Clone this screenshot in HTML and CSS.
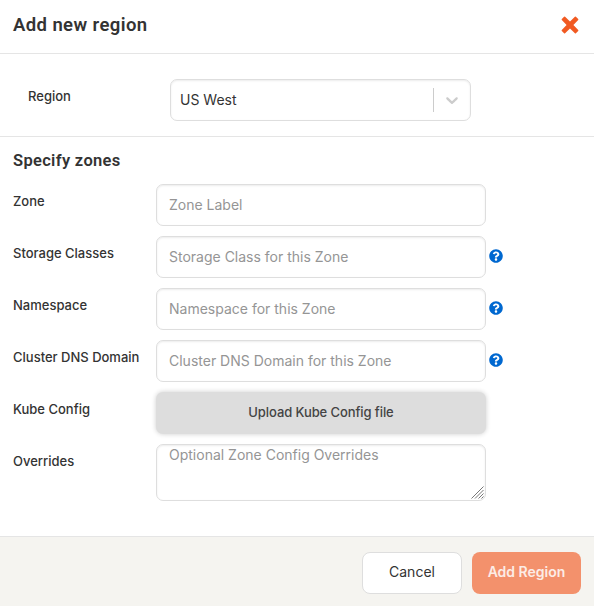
FILE: index.html
```html
<!DOCTYPE html>
<html lang="en">
<head>
<meta charset="utf-8">
<title>Add new region</title>
<link rel="stylesheet" href="styles.css">
</head>
<body>
<form class="modal">
  <header class="modal-header">
    <h1 class="title">Add new region</h1>
    <button class="close" type="button" aria-label="Close">
      <svg width="18" height="18" viewBox="0 0 18 18"><path d="M4.1.8 9 5.6 13.9.8Q14.4.4 14.9.8L17.2 3.1Q17.6 3.6 17.2 4.1L12.4 9 17.2 13.9Q17.6 14.4 17.2 14.9L14.9 17.2Q14.4 17.6 13.9 17.2L9 12.4 4.1 17.2Q3.6 17.6 3.1 17.2L.8 14.9Q.4 14.4.8 13.9L5.6 9 .8 4.1Q.4 3.6.8 3.1L3.1.8Q3.6.4 4.1.8Z" fill="#f15a22"/></svg>
    </button>
  </header>
  <section class="region">
    <span class="region-label">Region</span>
    <div class="select">
      <span class="select-value">US West</span>
      <span class="select-separator"></span>
      <svg class="chevron" width="20" height="20" viewBox="0 0 20 20"><path d="M4.516 7.548c0.436-0.446 1.043-0.481 1.576 0l3.908 3.747 3.908-3.747c0.533-0.481 1.141-0.446 1.574 0 0.436 0.445 0.408 1.197 0 1.615-0.406 0.418-4.695 4.502-4.695 4.502-0.217 0.223-0.502 0.335-0.787 0.335s-0.57-0.112-0.789-0.335c0 0-4.287-4.084-4.695-4.502s-0.436-1.17 0-1.615z" fill="#ccc"/></svg>
    </div>
  </section>
  <section class="zones">
    <h2 class="subtitle">Specify zones</h2>
    <div class="row"><label class="label" for="zone">Zone</label><input class="field" id="zone" placeholder="Zone Label"></div>
    <div class="row"><label class="label" for="storage">Storage Classes</label><input class="field" id="storage" placeholder="Storage Class for this Zone"><svg class="help" viewBox="0 0 512 512"><use href="#help-icon"/></svg></div>
    <div class="row"><label class="label" for="namespace">Namespace</label><input class="field" id="namespace" placeholder="Namespace for this Zone"><svg class="help" viewBox="0 0 512 512"><use href="#help-icon"/></svg></div>
    <div class="row"><label class="label" for="dns">Cluster DNS Domain</label><input class="field" id="dns" placeholder="Cluster DNS Domain for this Zone"><svg class="help" viewBox="0 0 512 512"><use href="#help-icon"/></svg></div>
    <div class="row"><span class="label">Kube Config</span><button class="upload" type="button">Upload Kube Config file</button></div>
    <div class="row"><label class="label" for="overrides">Overrides</label>
      <div class="area-wrap">
        <textarea class="field area" id="overrides" placeholder="Optional Zone Config Overrides"></textarea>
        <svg class="grip" width="13" height="13" viewBox="0 0 13 13"><path d="M.5 12.5 12.5.5M4 12.5 12.5 4M7.5 12.5l5-5M10.5 12.5l2-2" stroke="#777" stroke-width="1"/></svg>
      </div>
    </div>
  </section>
  <footer class="modal-footer">
    <button class="btn cancel" type="button">Cancel</button>
    <button class="btn submit" type="button">Add Region</button>
  </footer>
</form>
<svg width="0" height="0" class="defs"><symbol id="help-icon" viewBox="0 0 512 512"><path fill="#0068d0" d="M504 256c0 136.997-111.043 248-248 248S8 392.997 8 256C8 119.083 119.043 8 256 8s248 111.083 248 248zM262.655 90c-54.497 0-89.255 22.957-116.549 63.758-3.536 5.286-2.353 12.415 2.715 16.258l34.699 26.31c5.205 3.947 12.621 3.008 16.665-2.122 17.864-22.658 30.113-35.797 57.303-35.797 20.429 0 45.698 13.148 45.698 32.958 0 14.976-12.363 22.667-32.534 33.976C247.128 238.528 216 254.941 216 296v4c0 6.627 5.373 12 12 12h56c6.627 0 12-5.373 12-12v-1.333c0-28.462 83.186-29.647 83.186-106.667 0-58.002-60.165-102-116.531-102zM256 338c-25.365 0-46 20.635-46 46 0 25.364 20.635 46 46 46s46-20.636 46-46c0-25.365-20.635-46-46-46z"/></symbol></svg>
</body>
</html>
```
FILE: styles.css
```css
* { box-sizing: border-box; }
body { margin: 0; background: #fff; color: #333; font-family: Inter, "Liberation Sans", sans-serif; font-size: 13px; }
button, input, textarea { font-family: inherit; }
.modal { height: 606px; display: flex; flex-direction: column; overflow: hidden; }
.modal-header { height: 54px; padding: 0 15px 3px 13px; display: flex; align-items: center; justify-content: space-between; border-bottom: 1px solid #e5e5e5; }
.title, .subtitle { margin: 0; font-family: Roboto, sans-serif; font-weight: 600; }
.title { font-size: 18.5px; letter-spacing: .4px; }
.subtitle { font-size: 16.5px; line-height: 22px; letter-spacing: .32px; margin-bottom: 12px; }
.close { width: 18px; height: 18px; padding: 0; border: 0; background: none; }
.close svg { display: block; }
.region { height: 83px; display: flex; padding: 25px 0 0 28px; border-bottom: 1px solid #e5e5e5; }
.region-label { width: 142px; padding-top: 8px; line-height: 18px; font-weight: 500; }
.select { width: 301px; height: 42px; display: flex; align-items: center; padding-left: 9px; font-size: 14px; border: 1px solid #dedede; border-radius: 7px; box-shadow: inset 0 1px 2px rgba(0,0,0,.08); }
.select-value { flex: 1; padding-bottom: 2px; }
.select-separator { width: 1px; height: 24px; background: #ccc; }
.chevron { margin: 0 8px; }
.zones { flex: 1; padding: 13px 0 0 13px; }
.row { display: flex; min-height: 42px; margin-bottom: 10px; }
.label { width: 143px; padding-top: 8px; line-height: 18px; font-weight: 500; }
.field { width: 330px; height: 42px; padding: 0 12px 2px; border: 1px solid #dedede; border-radius: 7px; background: #fff; box-shadow: inset 0 1px 2px rgba(0,0,0,.08); color: #333; font-size: 14px; outline: 0; }
.field::placeholder { color: #959595; opacity: 1; }
.help { width: 14px; height: 14px; margin: 13.4px 0 0 3.4px; }
.upload { width: 330px; height: 42px; padding: 0 0 2px; border: 0; border-radius: 7px; background: #ddd; color: #444; font-size: 13px; font-weight: 500; letter-spacing: -.09px; box-shadow: 0 0 5px rgba(0,0,0,.2); }
.area-wrap { position: relative; height: 57px; }
.area { display: block; height: 57px; resize: none; line-height: 20px; }
.grip { position: absolute; right: 2px; bottom: 2px; }
.modal-footer { height: 70px; display: flex; justify-content: flex-end; gap: 10px; padding: 15px 13px 0; background: #f5f4f0; border-top: 1px solid #e5e5e5; }
.btn { height: 42px; padding: 0 0 3px; border-radius: 8px; font-size: 14px; }
.cancel { width: 100px; border: 1px solid #dedede; background: #fff; color: #333; }
.submit { width: 109px; border: 0; background: #f3916c; color: #fcece6; font-weight: 600; }
.defs { display: none; }
```
